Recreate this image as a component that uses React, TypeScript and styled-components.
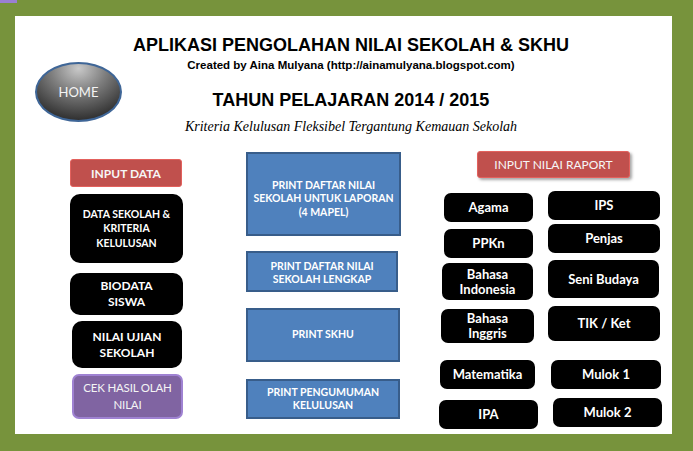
import React from 'react'
import styled, { createGlobalStyle, css } from 'styled-components'

const GlobalStyle = createGlobalStyle`
  html, body {
    margin: 0;
    padding: 0;
    background: #77933c;
  }

  body {
    width: 693px;
    height: 451px;
    overflow: hidden;
    font-family: 'Liberation Sans', Arial, sans-serif;
  }
`

type Box = {
  $w: number
  $h: number
  $mt?: number
  $ml?: number
}

// every sheet shape is sized and nudged by its own props
const placed = css<Box>`
  box-sizing: border-box;
  width: ${({ $w }) => $w}px;
  height: ${({ $h }) => $h}px;
  margin-top: ${({ $mt = 0 }) => $mt}px;
  margin-left: ${({ $ml = 0 }) => $ml}px;
  flex-shrink: 0;
  display: flex;
  align-items: center;
  justify-content: center;
  text-align: center;
  font-family: Lato, 'Open Sans', sans-serif;
  color: #ffffff;
`

const Frame = styled.div`
  width: 693px;
  height: 451px;
  padding-left: 15px;
  box-sizing: border-box;
`

const Sliver = styled.div`
  width: 17px;
  height: 3px;
  margin-left: -15px;
  background: #9a7fd2;
`

const Sheet = styled.div`
  width: 657px;
  height: 418px;
  margin-top: 13px;
  background: #ffffff;
`

const Header = styled.header`
  display: flex;
  height: 124px;
`

const HomeButton = styled.div`
  box-sizing: border-box;
  width: 87px;
  height: 60px;
  margin: 46px 0 0 20px;
  border-radius: 50%;
  border: 2px solid #3f6697;
  background: radial-gradient(ellipse 75% 95% at 50% 8%, #c9c9c9 0%, #7d7d7d 45%, #2c2c2c 100%);
  display: flex;
  align-items: center;
  justify-content: center;
  font-family: Lato, 'Open Sans', sans-serif;
  font-size: 13px;
  color: #f4f4f4;
`

const Titles = styled.div`
  width: 440px;
  margin-left: 9px;
  padding-top: 17.5px;
  text-align: center;
  color: #000000;
`

const Title = styled.h1`
  margin: 0;
  font-size: 18px;
  line-height: 22px;
  font-weight: 700;
`

const Credit = styled.p`
  margin: 2.5px 0 0;
  font-size: 11.5px;
  line-height: 15px;
  font-weight: 700;
`

const Year = styled.h2`
  margin: 16px 0 0;
  font-size: 18px;
  line-height: 22px;
  font-weight: 700;
`

const Motto = styled.p`
  margin: 6.5px 0 0;
  font-family: 'Liberation Serif', 'Times New Roman', serif;
  font-style: italic;
  font-size: 14px;
  line-height: 18px;
`

const Body = styled.main`
  display: flex;
  align-items: flex-start;
  padding-left: 55px;
`

const Column = styled.section<{ $w: number; $ml?: number }>`
  display: flex;
  flex-direction: column;
  width: ${({ $w }) => $w}px;
  margin-left: ${({ $ml = 0 }) => $ml}px;
`

const RedButton = styled.div<Box & { $bold?: boolean; $raised?: boolean }>`
  ${placed};
  background: #c0504d;
  border: 1px solid #e3615d;
  border-radius: 3px;
  font-size: 12px;
  font-weight: ${({ $bold }) => ($bold ? 700 : 400)};
  color: #f6f6f6;
  box-shadow: ${({ $raised }) => ($raised ? '2px 2px 3px rgba(0, 0, 0, 0.35)' : 'none')};
`

const MenuBox = styled.div<Box & { $size?: number; $lead?: number }>`
  ${placed};
  background: #000000;
  border-radius: 10px;
  font-weight: 700;
  font-size: ${({ $size = 12 }) => $size}px;
  line-height: ${({ $lead = 16 }) => $lead}px;
`

const CheckButton = styled.div<Box>`
  ${placed};
  background: #8064a2;
  border: 2px solid #9f82d2;
  border-radius: 7px;
  font-size: 11.5px;
  letter-spacing: -0.2px;
  line-height: 16.5px;
  color: #f4f4f4;
`

const PrintBox = styled.div<Box & { $pt?: number }>`
  ${placed};
  padding-top: ${({ $pt = 0 }) => $pt}px;
  background: #4f81bd;
  border: 2px solid #385d8a;
  font-weight: 700;
  font-size: 10.5px;
  line-height: 13.5px;
`

const SubjectGrid = styled.div`
  display: flex;
  align-items: flex-start;
`

const SubjectColumn = styled.div<{ $w: number; $ml?: number }>`
  display: flex;
  flex-direction: column;
  width: ${({ $w }) => $w}px;
  margin-left: ${({ $ml = 0 }) => $ml}px;
`

const Subject = styled.div<Box>`
  ${placed};
  background: #000000;
  border-radius: 7px;
  font-weight: 700;
  font-size: 13px;
  line-height: 15px;
`

const leftSubjects = [
  { label: 'Agama', w: 89, h: 29, mt: 15, ml: 5 },
  { label: 'PPKn', w: 89, h: 29, mt: 7, ml: 5 },
  { label: 'Bahasa\nIndonesia', w: 91, h: 37, mt: 5, ml: 3 },
  { label: 'Bahasa\nInggris', w: 93, h: 34, mt: 9, ml: 2 },
  { label: 'Matematika', w: 95, h: 29, mt: 17, ml: 1 },
  { label: 'IPA', w: 99, h: 29, mt: 11, ml: 0 },
]

const rightSubjects = [
  { label: 'IPS', w: 112, h: 29, mt: 13, ml: 0 },
  { label: 'Penjas', w: 112, h: 29, mt: 4, ml: 0 },
  { label: 'Seni Budaya', w: 111, h: 38, mt: 7, ml: 0 },
  { label: 'TIK / Ket', w: 112, h: 35, mt: 8, ml: 0 },
  { label: 'Mulok 1', w: 110, h: 29, mt: 19, ml: 3 },
  { label: 'Mulok 2', w: 109, h: 29, mt: 9, ml: 5 },
]

const Lines = ({ text }: { text: string }) => (
  <span>
    {text.split('\n').map((line, i) => (
      <React.Fragment key={i}>
        {i > 0 && <br />}
        {line}
      </React.Fragment>
    ))}
  </span>
)

const App = () => {
  return (
    <>
      <GlobalStyle />
      <Frame>
        <Sliver />
        <Sheet>
          <Header>
            <HomeButton>HOME</HomeButton>
            <Titles>
              <Title>APLIKASI PENGOLAHAN NILAI SEKOLAH &amp; SKHU</Title>
              <Credit>Created by Aina Mulyana (http://ainamulyana.blogspot.com)</Credit>
              <Year>TAHUN PELAJARAN 2014 / 2015</Year>
              <Motto>Kriteria Kelulusan Fleksibel Tergantung Kemauan Sekolah</Motto>
            </Titles>
          </Header>

          <Body>
            <Column $w={113}>
              <RedButton $w={112} $h={28} $mt={19} $bold>
                INPUT DATA
              </RedButton>
              <MenuBox $w={113} $h={69} $mt={7} $size={10.5} $lead={14.5}>
                <Lines text={'DATA SEKOLAH &\nKRITERIA\nKELULUSAN'} />
              </MenuBox>
              <MenuBox $w={113} $h={42} $mt={10}>
                <Lines text={'BIODATA\nSISWA'} />
              </MenuBox>
              <MenuBox $w={110} $h={47} $mt={6} $ml={2}>
                <Lines text={'NILAI UJIAN\nSEKOLAH'} />
              </MenuBox>
              <CheckButton $w={111} $h={45} $mt={6} $ml={2}>
                <Lines text={'CEK HASIL OLAH\nNILAI'} />
              </CheckButton>
            </Column>

            <Column $w={155} $ml={63}>
              <PrintBox $w={155} $h={84} $mt={12} $pt={10}>
                <Lines text={'PRINT DAFTAR NILAI\nSEKOLAH UNTUK LAPORAN\n(4 MAPEL)'} />
              </PrintBox>
              <PrintBox $w={152} $h={41} $mt={15} $pt={3}>
                <Lines text={'PRINT DAFTAR NILAI\nSEKOLAH LENGKAP'} />
              </PrintBox>
              <PrintBox $w={154} $h={54} $mt={16}>
                PRINT SKHU
              </PrintBox>
              <PrintBox $w={154} $h={40} $mt={17}>
                <Lines text={'PRINT PENGUMUMAN\nKELULUSAN'} />
              </PrintBox>
            </Column>

            <Column $w={223} $ml={38}>
              <RedButton $w={153} $h={27} $mt={11} $ml={38} $raised>
                INPUT NILAI RAPORT
              </RedButton>
              <SubjectGrid>
                <SubjectColumn $w={99}>
                  {leftSubjects.map((s) => (
                    <Subject key={s.label} $w={s.w} $h={s.h} $mt={s.mt} $ml={s.ml}>
                      <Lines text={s.label} />
                    </Subject>
                  ))}
                </SubjectColumn>
                <SubjectColumn $w={114} $ml={10}>
                  {rightSubjects.map((s) => (
                    <Subject key={s.label} $w={s.w} $h={s.h} $mt={s.mt} $ml={s.ml}>
                      <Lines text={s.label} />
                    </Subject>
                  ))}
                </SubjectColumn>
              </SubjectGrid>
            </Column>
          </Body>
        </Sheet>
      </Frame>
    </>
  )
}

export default App
